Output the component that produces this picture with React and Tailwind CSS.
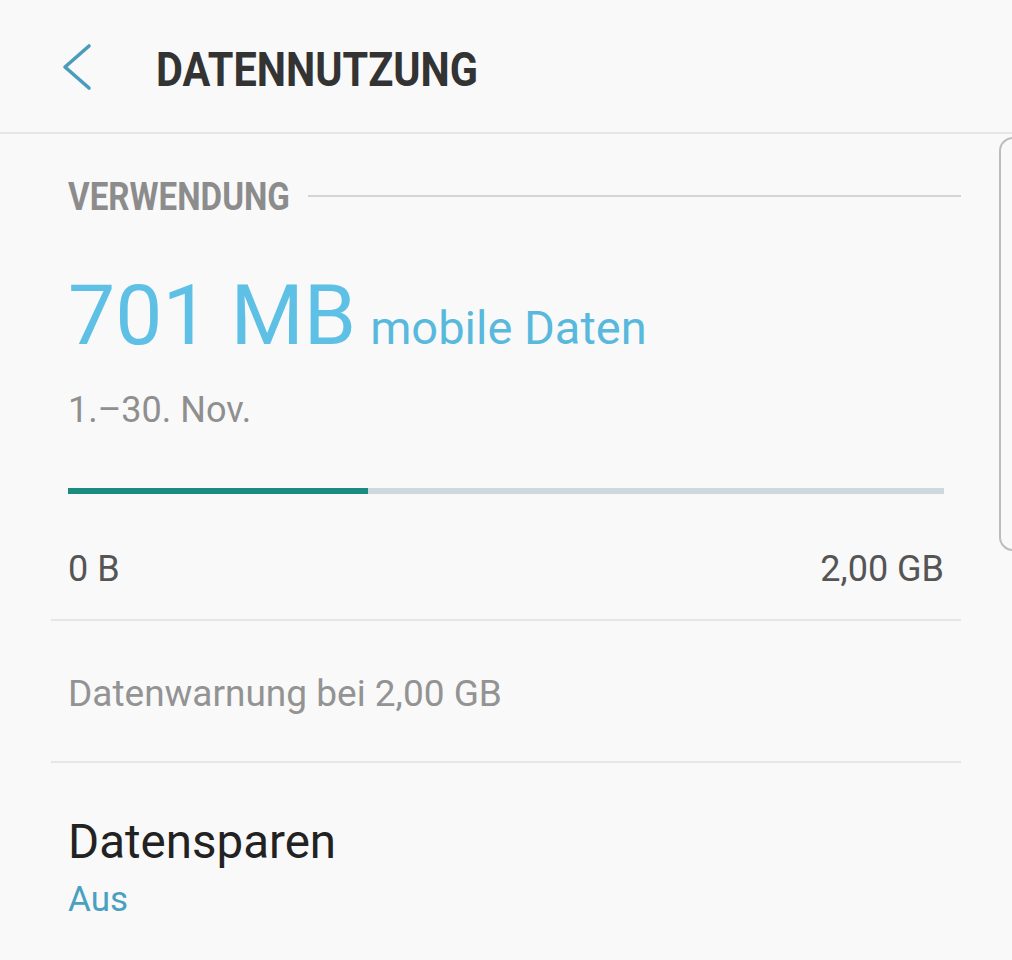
import React from 'react';

const font = { fontFamily: 'Roboto, "Noto Sans", sans-serif' };

const usedMb = 701;
const limitMb = 2048;

const App = () => {
  const pct = (usedMb / limitMb) * 100;

  return (
    <div className="relative w-[1012px] h-[960px] overflow-hidden bg-[#f9f9f9]" style={font}>
      {/* header */}
      <div className="flex h-[134px] border-b-2 border-[#e7e7e7]">
        <svg className="ml-[60px] mt-[40px] w-[36px] h-[54px]" viewBox="0 0 36 54" fill="none">
          <path d="M29 6 L5 27 L29 48" stroke="#4b9cbb" strokeWidth="3.6" strokeLinecap="round" strokeLinejoin="round" />
        </svg>
        <div className="ml-[60px] mt-[45px] whitespace-nowrap">
          <span className="inline-block origin-left scale-x-[0.845] text-[49px] leading-none font-bold text-[#333333]">
            DATENNUTZUNG
          </span>
        </div>
      </div>

      {/* usage */}
      <div className="ml-[51px] w-[910px]">
        <div className="flex items-center pl-[17px] mt-[44px]">
          <div className="w-[240px] whitespace-nowrap">
            <span className="inline-block origin-left scale-x-[0.85] text-[39px] leading-none font-bold text-[#8c8c8c]">
              VERWENDUNG
            </span>
          </div>
          <div className="flex-1 h-[2px] bg-[#d4d4d4] -mt-[4px]" />
        </div>

        <div className="px-[17px]">
          <div className="flex items-baseline mt-[57px]">
            <span className="text-[84px] leading-none text-[#5ec0e4]">701 MB</span>
            <span className="ml-[14px] text-[47px] leading-none text-[#58b9dd]">mobile Daten</span>
          </div>

          <div className="mt-[34px] text-[36px] leading-none text-[#8f8f8f]">1.–30. Nov.</div>

          <div className="mt-[60px] h-[6px] bg-[#cfd8dc]">
            <div className="h-full bg-[#1a8c80]" style={{ width: `${pct}%` }} />
          </div>

          <div className="flex justify-between mt-[57px] text-[36px] leading-none text-[#555555]">
            <span>0 B</span>
            <span>2,00 GB</span>
          </div>
        </div>

        <div className="mt-[32px] h-[2px] bg-[#e6e6e6]" />

        <div className="px-[17px] mt-[54px] text-[37px] leading-none text-[#939393]">
          Datenwarnung bei 2,00 GB
        </div>

        <div className="mt-[49px] h-[2px] bg-[#e6e6e6]" />

        <div className="px-[17px]">
          <div className="mt-[56px] text-[47.5px] leading-none text-[#222222]">Datensparen</div>
          <div className="mt-[15px] text-[35px] leading-none text-[#4aa0c0]">Aus</div>
        </div>
      </div>

      {/* scroll indicator */}
      <div className="absolute left-[999px] top-[137px] w-[40px] h-[414px] rounded-[14px] border-2 border-[#bdbdbd]" />
    </div>
  );
};

export default App;
